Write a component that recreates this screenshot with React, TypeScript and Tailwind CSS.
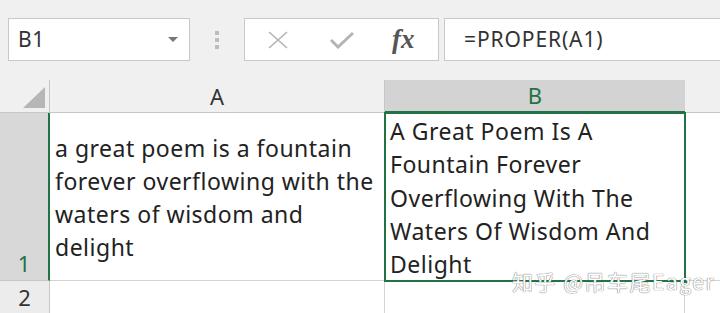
import React from "react";

const cellFont = { fontFamily: '"Noto Sans", "Open Sans", sans-serif' };

const App = () => {
  const lineA = ["a great poem is a fountain", "forever overflowing with the", "waters of wisdom and", "delight"];
  const lineB = ["A Great Poem Is A", "Fountain Forever", "Overflowing With The", "Waters Of Wisdom And", "Delight"];

  return (
    <div className="relative w-[720px] h-[313px] overflow-hidden bg-[#f0f0f0] text-[#222]" style={cellFont}>
      {/* Formula bar */}
      <div className="flex items-center h-[80px] pb-[19px] pt-[18px]">
        <div className="ml-[8px] w-[182px] h-[43px] bg-white border border-[#c8c8c8] flex items-center pl-[9px] pr-[11px]">
          <span className="text-[21px] text-[#333] flex-1 tracking-[0.5px]">B1</span>
          <svg width="10" height="6" viewBox="0 0 10 6">
            <path d="M0 0 L10 0 L5 5 Z" fill="#777" />
          </svg>
        </div>
        <div className="w-[54px] flex flex-col items-center gap-[3px]">
          <span className="w-[4px] h-[4px] bg-[#bdbdbd]" />
          <span className="w-[4px] h-[4px] bg-[#bdbdbd]" />
          <span className="w-[4px] h-[4px] bg-[#bdbdbd]" />
        </div>
        <div className="w-[195px] h-[43px] bg-white border border-[#c8c8c8] flex items-center">
          <svg className="ml-[22px]" width="22" height="18" viewBox="0 0 22 18">
            <path d="M2 1 L20 17 M20 1 L2 17" stroke="#b4b4b4" strokeWidth="1.6" fill="none" />
          </svg>
          <svg className="ml-[41px]" width="24" height="18" viewBox="0 0 24 18">
            <path d="M1 9 L8 16 L23 2" stroke="#b4b4b4" strokeWidth="3" fill="none" />
          </svg>
          <span
            className="ml-[38px] text-[27px] italic font-bold text-[#555] leading-none"
            style={{ fontFamily: '"Liberation Serif", serif' }}
          >
            fx
          </span>
        </div>
        <div className="ml-[5px] flex-1 h-[43px] bg-white border border-[#c8c8c8] border-r-0 flex items-center pl-[19px]">
          <span className="text-[21px] text-[#333] tracking-[0.9px]">=PROPER(A1)</span>
        </div>
      </div>

      {/* Grid */}
      <div className="grid grid-cols-[50px_335px_300px_1fr] grid-rows-[33px_168px_1fr] h-[233px]">
        {/* header row */}
        <div className="border-r border-b border-[#c6c6c6] flex items-end justify-end pb-[4px] pr-[4px]">
          <svg width="22" height="21" viewBox="0 0 22 21">
            <path d="M22 0 L22 21 L0 21 Z" fill="#b6b6b6" />
          </svg>
        </div>
        <div className="border-r border-b border-[#c6c6c6] flex items-center justify-center text-[22px] text-[#333]">
          A
        </div>
        <div className="bg-[#d3d3d3] border-b-2 border-[#217346] flex items-center justify-center text-[22px] text-[#217346]">
          B
        </div>
        <div className="border-b border-[#c6c6c6]" />

        {/* row 1 */}
        <div className="bg-[#d8d8d8] border-r-2 border-[#217346] border-b border-b-[#c6c6c6] flex items-end justify-center pb-[0px] text-[22px] text-[#217346]">
          1
        </div>
        <div className="bg-white border-r border-b border-[#d4d4d4] pt-[19px] pl-[5px] text-[23px] leading-[33px] tracking-[0.5px] overflow-hidden">
          {lineA.map((l) => (
            <div key={l} className="whitespace-nowrap">{l}</div>
          ))}
        </div>
        <div className="relative bg-white pt-[2px] pl-[5px] text-[23px] leading-[33.3px] tracking-[0.5px] outline-2 outline-[#217346] -outline-offset-1 overflow-hidden">
          {lineB.map((l) => (
            <div key={l} className="whitespace-nowrap">{l}</div>
          ))}
        </div>
        <div className="bg-white border-b border-[#d4d4d4]" />

        {/* row 2 */}
        <div className="bg-[#ececec] border-r border-[#c6c6c6] flex items-center justify-center text-[22px] text-[#333]">
          2
        </div>
        <div className="bg-white border-r border-[#d4d4d4]" />
        <div className="bg-white border-r border-[#d4d4d4]" />
        <div className="bg-white" />
      </div>

      {/* fill handle */}
      <div className="absolute left-[683px] top-[278px] w-[6px] h-[6px] bg-[#217346] border border-white" />

      {/* watermark */}
      <div
        className="absolute left-[512px] top-[266px] text-[21px] text-white tracking-[1.5px]"
        style={{
          fontFamily: '"Noto Sans CJK SC", "Noto Sans", sans-serif',
          textShadow: "0 0 1px #777, 0 0 1px #777",
        }}
      >
        知乎 @吊车尾Eager
      </div>
    </div>
  );
};

export default App;
